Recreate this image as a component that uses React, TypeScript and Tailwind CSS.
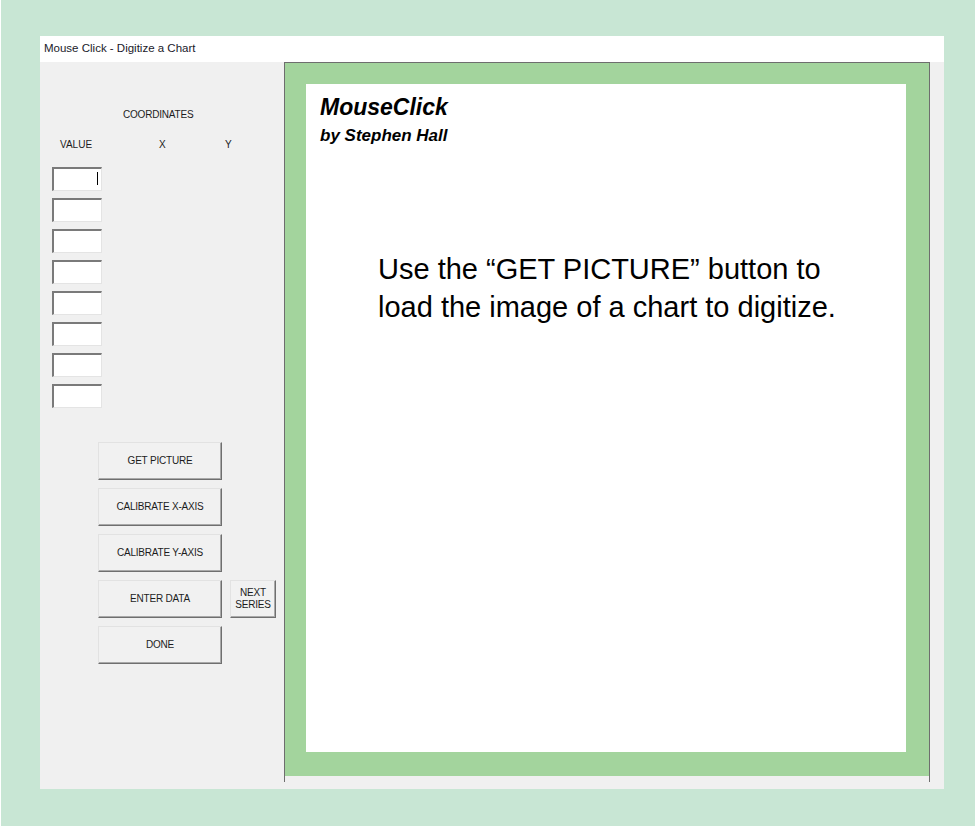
import React from 'react'

const UI_FONT = { fontFamily: '"Liberation Sans", Arial, sans-serif' }

function ValueBox({ cursor }: { cursor?: boolean }) {
  return (
    <div className="relative w-[50px] h-[24px] bg-white border-t-2 border-l-2 border-b border-r border-t-[#7a7a7a] border-l-[#7a7a7a] border-b-[#e4e4e4] border-r-[#e4e4e4]">
      {cursor && <div className="absolute right-[3px] top-[3px] w-[1px] h-[13px] bg-black" />}
    </div>
  )
}

function FormButton({ children, className = '' }: { children: React.ReactNode; className?: string }) {
  return (
    <button
      className={`h-[38px] bg-[#f1f1f1] border border-t-[#e2e2e2] border-l-[#e2e2e2] border-r-[#6f6f6f] border-b-[#6f6f6f] shadow-[inset_-1px_-1px_0_#a9a9a9] text-[10px] leading-[12px] tracking-[-0.02em] text-[#1c1c1c] flex items-center justify-center text-center ${className}`}
    >
      {children}
    </button>
  )
}

export default function App() {
  return (
    <div className="w-[980px] h-[826px] bg-white flex" style={UI_FONT}>
      <div className="ml-[1px] w-[974px] h-full bg-[#c8e6d4] pt-[36px] pl-[39px]">
        {/* window */}
        <div className="w-[904px] h-[753px] flex flex-col">
          <div className="h-[26px] bg-white flex items-center pl-[4px] text-[11.5px] text-[#1a1a2a]">
            Mouse Click - Digitize a Chart
          </div>

          <div className="flex-1 bg-[#f0f0f0] flex">
            {/* left controls */}
            <div className="w-[244px] flex flex-col text-[10px] text-[#1c1c1c]">
              <div className="mt-[47px] ml-[83px] h-[12px] leading-[12px] tracking-[-0.02em]">COORDINATES</div>
              <div className="mt-[18px] h-[12px] leading-[12px] flex">
                <span className="ml-[20px] w-[99px]">VALUE</span>
                <span className="w-[66px]">X</span>
                <span>Y</span>
              </div>

              <div className="mt-[16px] ml-[12px] flex flex-col gap-[7px]">
                <ValueBox cursor />
                <ValueBox />
                <ValueBox />
                <ValueBox />
                <ValueBox />
                <ValueBox />
                <ValueBox />
                <ValueBox />
              </div>

              <div className="mt-[34px] ml-[58px] flex flex-col gap-[8px]">
                <FormButton className="w-[124px]">GET PICTURE</FormButton>
                <FormButton className="w-[124px]">CALIBRATE X-AXIS</FormButton>
                <FormButton className="w-[124px]">CALIBRATE Y-AXIS</FormButton>
                <div className="flex gap-[8px]">
                  <FormButton className="w-[124px]">ENTER DATA</FormButton>
                  <FormButton className="w-[46px]">
                    NEXT<br />SERIES
                  </FormButton>
                </div>
                <FormButton className="w-[124px]">DONE</FormButton>
              </div>
            </div>

            {/* picture area */}
            <div className="w-[646px] h-[720px] border-l border-r border-t border-[#6e6e6e]">
              <div className="h-[713px] bg-[#a3d49d] pt-[21px] pl-[21px] pr-[23px] pb-[24px]">
                <div className="w-[600px] h-[668px] bg-white pl-[14px] pt-[10px]">
                  <div className="text-[23px] leading-[26px] font-bold italic text-black">MouseClick</div>
                  <div className="mt-[6px] text-[17px] leading-[20px] font-bold italic text-black">by Stephen Hall</div>
                  <div className="mt-[104px] ml-[58px] text-[29px] leading-[38px] text-black">
                    Use the “GET PICTURE” button to
                    <br />
                    load the image of a chart to digitize.
                  </div>
                </div>
              </div>
            </div>
          </div>
        </div>
      </div>
    </div>
  )
}
